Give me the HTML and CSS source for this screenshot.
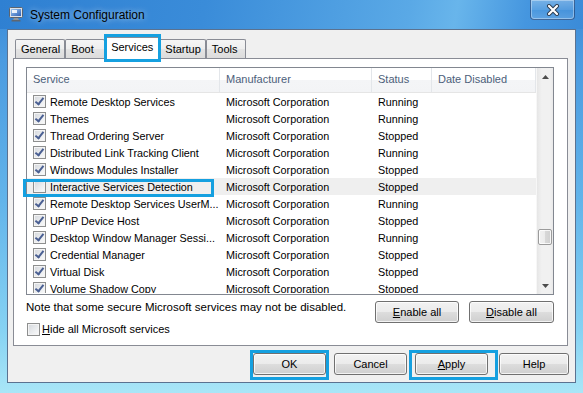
FILE: index.html
```html
<!DOCTYPE html>
<html lang="en">
<head>
    <meta charset="UTF-8">
    <title>System Configuration</title>
    <link rel="stylesheet" href="styles.css">
</head>
<body>
    <div class="window">
        <div class="titlebar">
            <svg class="app-icon" width="16" height="16" viewBox="0 0 16 16">
                <defs>
                    <linearGradient id="scr" x1="0" y1="0" x2="1" y2="1">
                        <stop offset="0" stop-color="#9cc6ef"/>
                        <stop offset="1" stop-color="#2f62b8"/>
                    </linearGradient>
                </defs>
                <rect x="1.5" y="1.5" width="13" height="10" rx="1" fill="#dfe3e8" stroke="#5b6470"/>
                <rect x="3" y="3" width="10" height="7" fill="url(#scr)"/>
                <rect x="4" y="4" width="5" height="3" fill="#ffffff" opacity="0.85"/>
                <path d="M6 12h4l1 2H5z" fill="#8d949d"/>
                <rect x="3.5" y="14" width="9" height="1.5" rx="0.5" fill="#5e6670"/>
            </svg>
            <span class="title">System Configuration</span>
            <div class="close-btn">
                <svg width="14" height="12" viewBox="0 0 14 12">
                    <path d="M3 2l8 8M11 2l-8 8" stroke="#2b3a4f" stroke-width="4" stroke-linecap="round"/>
                    <path d="M3 2l8 8M11 2l-8 8" stroke="#ffffff" stroke-width="2.2" stroke-linecap="round"/>
                </svg>
            </div>
        </div>

        <div class="client">
            <div class="tabs">
                <div class="tab">General</div>
                <div class="tab">Boot</div>
                <div class="tab active marked">Services</div>
                <div class="tab">Startup</div>
                <div class="tab">Tools</div>
            </div>

            <div class="panel">
                <div class="list">
                    <div class="table">
                        <div class="list-header">
                            <div class="col c-service">Service</div>
                            <div class="col c-maker">Manufacturer</div>
                            <div class="col c-status">Status</div>
                            <div class="col c-date">Date Disabled</div>
                        </div>
                        <div class="rows">
                            <div class="row"><div class="cell c-service"><span class="checkbox checked"></span>Remote Desktop Services</div><div class="cell c-maker">Microsoft Corporation</div><div class="cell c-status">Running</div><div class="cell c-date"></div></div>
                            <div class="row"><div class="cell c-service"><span class="checkbox checked"></span>Themes</div><div class="cell c-maker">Microsoft Corporation</div><div class="cell c-status">Running</div><div class="cell c-date"></div></div>
                            <div class="row"><div class="cell c-service"><span class="checkbox checked"></span>Thread Ordering Server</div><div class="cell c-maker">Microsoft Corporation</div><div class="cell c-status">Stopped</div><div class="cell c-date"></div></div>
                            <div class="row"><div class="cell c-service"><span class="checkbox checked"></span>Distributed Link Tracking Client</div><div class="cell c-maker">Microsoft Corporation</div><div class="cell c-status">Running</div><div class="cell c-date"></div></div>
                            <div class="row"><div class="cell c-service"><span class="checkbox checked"></span>Windows Modules Installer</div><div class="cell c-maker">Microsoft Corporation</div><div class="cell c-status">Stopped</div><div class="cell c-date"></div></div>
                            <div class="row hover"><div class="cell c-service marked"><span class="checkbox"></span>Interactive Services Detection</div><div class="cell c-maker">Microsoft Corporation</div><div class="cell c-status">Stopped</div><div class="cell c-date"></div></div>
                            <div class="row"><div class="cell c-service"><span class="checkbox checked"></span>Remote Desktop Services UserM...</div><div class="cell c-maker">Microsoft Corporation</div><div class="cell c-status">Running</div><div class="cell c-date"></div></div>
                            <div class="row"><div class="cell c-service"><span class="checkbox checked"></span>UPnP Device Host</div><div class="cell c-maker">Microsoft Corporation</div><div class="cell c-status">Stopped</div><div class="cell c-date"></div></div>
                            <div class="row"><div class="cell c-service"><span class="checkbox checked"></span>Desktop Window Manager Sessi...</div><div class="cell c-maker">Microsoft Corporation</div><div class="cell c-status">Running</div><div class="cell c-date"></div></div>
                            <div class="row"><div class="cell c-service"><span class="checkbox checked"></span>Credential Manager</div><div class="cell c-maker">Microsoft Corporation</div><div class="cell c-status">Stopped</div><div class="cell c-date"></div></div>
                            <div class="row"><div class="cell c-service"><span class="checkbox checked"></span>Virtual Disk</div><div class="cell c-maker">Microsoft Corporation</div><div class="cell c-status">Stopped</div><div class="cell c-date"></div></div>
                            <div class="row"><div class="cell c-service"><span class="checkbox checked"></span>Volume Shadow Copy</div><div class="cell c-maker">Microsoft Corporation</div><div class="cell c-status">Stopped</div><div class="cell c-date"></div></div>
                        </div>
                    </div>
                    <div class="scrollbar">
                        <div class="sb-arrow">
                            <svg width="7" height="4" viewBox="0 0 7 4"><path d="M0 4L3.5 0L7 4z" fill="#4d4d4d"/></svg>
                        </div>
                        <div class="sb-track">
                            <div class="sb-thumb"></div>
                        </div>
                        <div class="sb-arrow">
                            <svg width="7" height="4" viewBox="0 0 7 4"><path d="M0 0L7 0L3.5 4z" fill="#4d4d4d"/></svg>
                        </div>
                    </div>
                </div>

                <div class="panel-footer">
                    <div class="footer-left">
                        <div class="note">Note that some secure Microsoft services may not be disabled.</div>
                        <div class="hide-ms"><span class="checkbox"></span><span><u>H</u>ide all Microsoft services</span></div>
                    </div>
                    <div class="footer-buttons">
                        <button class="btn btn-enable"><u>E</u>nable all</button>
                        <button class="btn btn-disable"><u>D</u>isable all</button>
                    </div>
                </div>
            </div>

            <div class="dialog-buttons">
                <button class="btn btn-ok marked">OK</button>
                <button class="btn btn-cancel">Cancel</button>
                <button class="btn btn-apply marked"><u>A</u>pply</button>
                <button class="btn btn-help">Help</button>
            </div>
        </div>
    </div>
</body>
</html>
```

FILE: styles.css
```css
body {
    margin: 0;
    width: 583px;
    height: 393px;
    overflow: hidden;
    font-family: "Liberation Sans", Arial, sans-serif;
    font-size: 11px;
    color: #000000;
}

.window {
    height: 393px;
    display: flex;
    flex-direction: column;
    background: linear-gradient(to bottom, #3a88d6 0px, #4b9be0 60px, #62b4ea 200px, #86d2f3 330px, #a9e6f7 393px);
}

/* title bar */

.titlebar {
    height: 29px;
    display: flex;
    align-items: center;
    padding-left: 8px;
    background: linear-gradient(100deg, #2f80d2 0%, #3a8cd9 35%, #5aa9e6 70%, #68b5eb 78%, #4596df 90%, #3b8bd8 100%);
}

.app-icon {
    display: block;
    margin-top: -1px;
}

.title {
    margin-left: 6px;
    font-size: 12px;
    color: #000000;
    text-shadow: 0 0 6px rgba(255, 255, 255, 0.7);
}

.close-btn {
    margin-left: auto;
    margin-right: 8px;
    align-self: flex-start;
    width: 43px;
    height: 19px;
    display: flex;
    align-items: center;
    justify-content: center;
    border: 1px solid rgba(20, 45, 90, 0.55);
    border-top: none;
    border-radius: 0 0 4px 4px;
    background: linear-gradient(rgba(255, 255, 255, 0.28), rgba(255, 255, 255, 0.12) 50%, rgba(255, 255, 255, 0.04) 51%, rgba(255, 255, 255, 0.15));
    box-shadow: inset 0 0 0 1px rgba(255, 255, 255, 0.35);
}

/* client area */

.client {
    flex: 1;
    margin: 0 7px 10px 7px;
    border: 1px solid #5b7290;
    background-color: #f0f0f0;
    display: flex;
    flex-direction: column;
}

.tabs {
    height: 28px;
    display: flex;
    align-items: flex-end;
    padding-left: 7px;
}

.tab {
    height: 19px;
    min-width: 40px;
    box-sizing: border-box;
    padding: 0 4px 0 5px;
    line-height: 18px;
    border: 1px solid #898c95;
    border-bottom: none;
    border-radius: 2px 2px 0 0;
    background: linear-gradient(#f5f5f5 0%, #eeeeee 50%, #e4e4e4 51%, #dcdcdc 100%);
}

.tab.active {
    position: relative;
    z-index: 1;
    height: 22px;
    line-height: 19px;
    margin: 0 -1px -1px -1px;
    padding: 0 6px;
    background: #ffffff;
}

.marked {
    position: relative;
}

.marked::after {
    content: "";
    position: absolute;
    border: 3px solid #15a0e0;
    pointer-events: none;
}

.tab.marked::after {
    top: -4px;
    bottom: -3px;
    left: -1px;
    right: -2px;
}

.panel {
    height: 288px;
    box-sizing: border-box;
    margin: 0 7px 0 5px;
    padding: 8px 13px 0 12px;
    border: 1px solid #898c95;
    background-color: #ffffff;
}

/* list view */

.list {
    height: 228px;
    box-sizing: border-box;
    border: 1px solid #828790;
    display: flex;
}

.table {
    width: 509px;
}

.list-header {
    height: 25px;
    box-sizing: border-box;
    display: flex;
    border-bottom: 1px solid #e5e5e5;
    background: linear-gradient(#ffffff 0%, #ffffff 50%, #f4f5f7 51%, #f3f4f6 100%);
}

.col {
    box-sizing: border-box;
    padding-left: 6px;
    line-height: 23px;
    color: #4c607a;
    border-right: 1px solid #e3e6ea;
}

.c-service { width: 193px; }
.c-maker { width: 152px; }
.c-status { width: 60px; }
.c-date { width: 104px; }

.rows {
    height: 200px;
    overflow-x: visible;
    overflow-y: clip;
}

.row {
    height: 17px;
    display: flex;
}

.row.hover {
    background-color: #efefef;
}

.cell {
    box-sizing: border-box;
    padding-left: 6px;
    line-height: 18px;
    font-size: 10.8px;
    white-space: nowrap;
}

.cell.c-service {
    display: flex;
    align-items: center;
}

.cell.c-service .checkbox {
    margin-right: 4px;
}

.cell.marked::after {
    top: 1px;
    bottom: -2px;
    left: -4px;
    right: 6px;
}

.checkbox {
    position: relative;
    display: inline-block;
    flex: none;
    width: 13px;
    height: 13px;
    box-sizing: border-box;
    border: 1px solid #8e8f8f;
    background: linear-gradient(135deg, #d4d7dc 0%, #eceef0 60%, #fbfbfb 100%);
    box-shadow: inset 0 0 0 1px #f4f4f4;
}

.checkbox.checked::after {
    content: "";
    position: absolute;
    left: 3px;
    top: 0px;
    width: 3px;
    height: 7px;
    border: solid #4a5f92;
    border-width: 0 2px 2px 0;
    transform: rotate(38deg);
}

/* scrollbar */

.scrollbar {
    width: 17px;
    display: flex;
    flex-direction: column;
    background: linear-gradient(to right, #e6e6e6 0%, #f1f1f1 30%, #f1f1f1 80%, #e9e9e9 100%);
    border-left: 1px solid #f7f7f7;
}

.sb-arrow {
    height: 17px;
    display: flex;
    align-items: center;
    justify-content: center;
}

.sb-arrow svg {
    display: block;
}

.sb-track {
    flex: 1;
}

.sb-thumb {
    margin: 144px 1px 0 1px;
    height: 16px;
    box-sizing: border-box;
    border: 1px solid #9b9b9b;
    border-radius: 2px;
    background: linear-gradient(to right, #f2f2f2 0%, #ebebeb 50%, #d8d8d8 51%, #d0d0d0 100%);
    box-shadow: inset 0 0 0 1px rgba(255, 255, 255, 0.8);
}

/* panel footer */

.panel-footer {
    display: flex;
    justify-content: space-between;
    margin-top: 4px;
}

.note {
    line-height: 16px;
    font-size: 11.5px;
}

.hide-ms {
    margin-top: 6px;
    display: flex;
    align-items: center;
    line-height: 16px;
    margin-left: 1px;
}

.hide-ms .checkbox {
    margin-right: 2px;
}

.footer-buttons {
    display: flex;
    margin-top: 2px;
}

.btn {
    height: 22px;
    box-sizing: border-box;
    padding: 0;
    border: 1px solid #707070;
    border-radius: 3px;
    background: linear-gradient(#f2f2f2 0%, #ebebeb 50%, #dddddd 51%, #cfcfcf 100%);
    box-shadow: inset 0 0 0 1px rgba(255, 255, 255, 0.75);
    font-family: inherit;
    font-size: 11px;
    color: #000000;
}

.btn-enable { width: 84px; margin-right: 10px; }
.btn-disable { width: 85px; }

.dialog-buttons {
    display: flex;
    justify-content: flex-end;
    padding: 7px 6px 0 0;
}

.dialog-buttons .btn {
    width: 73px;
    margin-left: 8px;
}

.dialog-buttons .btn-help {
    width: 70px;
    margin-left: 11px;
}

.btn.marked::after {
    top: -4px;
    bottom: -6px;
    left: -4px;
    right: -4px;
}

.btn-apply.marked::after {
    left: -7px;
    right: -11px;
}
```
